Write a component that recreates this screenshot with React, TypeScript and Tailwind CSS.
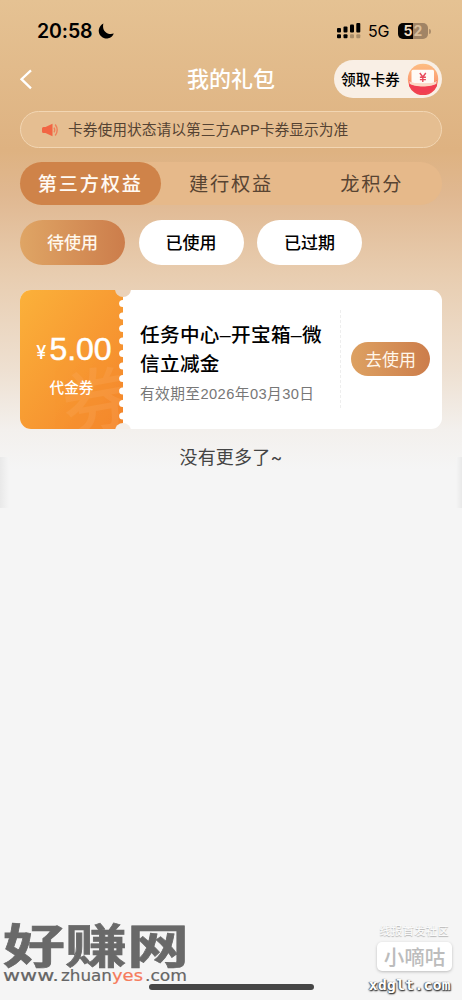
import React from "react";

const sans = "font-['Inter','Noto_Sans_CJK_SC',sans-serif]";
const liberation = "font-['Liberation_Sans','Noto_Sans_CJK_SC',sans-serif]";

function StatusBar() {
  return (
    <div className="flex h-[53px] items-center pt-[9px] pl-[37px] pr-[31px] text-black">
      <span className="w-[56px] text-[19.5px] leading-6 font-semibold tracking-[-0.1px] whitespace-nowrap">20:58</span>
      <svg className="ml-[4px] h-[18px] w-[18px]" viewBox="0 0 18 18">
        <path d="M6.4 1.6A7.8 7.8 0 1 0 16.8 11.6C10 13.6 4.6 8.6 6.4 1.6Z" />
      </svg>
      <svg className="ml-auto h-[18px] w-[24px]" viewBox="0 0 24 18">
        <g>
          <rect x="0" y="6" width="4" height="4.5" rx="1" />
          <rect x="6.5" y="4.5" width="4" height="6" rx="1" />
          <rect x="13" y="2.5" width="4" height="8" rx="1" />
          <rect x="19.3" y="1" width="4" height="9.5" rx="1" />
          <rect x="0" y="12.3" width="4" height="4" rx="1" />
          <rect x="6.5" y="12.3" width="4" height="4" rx="1" />
        </g>
        <g opacity=".25">
          <rect x="13" y="12.3" width="4" height="4" rx="1" />
          <rect x="19.3" y="12.3" width="4" height="4" rx="1" />
        </g>
      </svg>
      <span className="ml-[7px] w-[22px] text-[16px] leading-5 tracking-[-0.2px] whitespace-nowrap">5G</span>
      <div className="ml-[8px] flex h-[16px] w-[30px] overflow-hidden rounded-[5px] bg-[linear-gradient(90deg,#080502_51%,#a18465_51%)] text-[14px] leading-4 font-bold">
        <span className="w-[15.5px] pr-px text-right text-[#f2dfc5]">5</span>
        <span className="text-[#d9bd99]">2</span>
      </div>
      <div className="ml-px h-[5px] w-[2px] rounded-r-full bg-[#ad8e6c]" />
    </div>
  );
}

function Header() {
  return (
    <header className="grid h-[52px] grid-cols-[154px_154px_154px] items-center">
      <svg className="ml-[19px] h-[22px] w-[14px]" viewBox="0 0 14 22" fill="none" stroke="white" strokeWidth="2.3">
        <path d="M12 2.3L2.5 11.2L12 20.3" />
      </svg>
      <h1 className="text-center text-[22px] leading-8 font-medium text-white">我的礼包</h1>
      <div className="ml-[26px] flex h-[38px] w-[108px] items-center rounded-full bg-[#f9efe5] pl-[7px] text-black">
        <span className="w-[60px] pt-[2px] text-[14.7px] font-medium whitespace-nowrap">领取卡券</span>
        <svg className="ml-[6px] h-[32px] w-[32px]" viewBox="0 0 32 32">
          <defs>
            <linearGradient id="coupon" x1="0" x2="0" y1="0" y2="1">
              <stop stopColor="#fdbd82" />
              <stop offset=".6" stopColor="#fb9b70" />
              <stop offset="1" stopColor="#f9605a" />
            </linearGradient>
          </defs>
          <circle cx="16" cy="16" r="15.2" fill="url(#coupon)" />
          <path d="M2 17C6 22 26 22 30 17V23A15.2 15.2 0 0 1 2 23Z" fill="#f0434f" />
          <rect x="4.5" y="6.8" width="22.5" height="14" rx="1.5" fill="#fffaf6" />
          <path d="M2.2 17.5C6 21.8 26 21.8 29.8 17.5L29.4 21C25 25 7 25 2.6 21Z" fill="#fbd9c6" />
          <path d="M2.2 20.5C7 24.5 25 24.5 29.8 20.5A14.8 14.8 0 0 1 2.2 20.5Z" fill="#f13e53" />
          <path d="M12.8 10l3 4l3-4M12.9 14.2h6M12.9 16.6h6M15.8 14v5" fill="none" stroke="#e84a5b" strokeWidth="1.4" />
        </svg>
      </div>
    </header>
  );
}

function Notice() {
  return (
    <div className="mx-[20px] mt-[6px] flex h-[37px] items-center rounded-full border border-[#f2d6b3] bg-[#e5be91] pl-[21px] text-[#554333]">
      <svg className="h-[14px] w-[17px]" viewBox="0 0 17 14">
        <path d="M1.5 4H3.5L10.5 .8V13.2L3.5 10H1.5Q0 10 0 8.5V5.5Q0 4 1.5 4Z" fill="#f26543" />
        <path d="M12 4.7q1.4 2.3 0 4.6M13.2 1.5q4 5.4 0 11" fill="none" stroke="#ef8059" strokeWidth="1.4" />
      </svg>
      <span className={`${liberation} ml-[9px] text-[14.75px] leading-5 whitespace-nowrap`}>卡券使用状态请以第三方APP卡券显示为准</span>
    </div>
  );
}

function Tabs() {
  return (
    <nav className="mx-[20px] mt-[14px] grid h-[43px] grid-cols-3 items-center rounded-full bg-[#e6b98a] text-center text-[19.2px] tracking-[1.8px] text-[#584432]">
      <span className="flex h-full items-center justify-center rounded-full bg-[#cf8349] pt-[2px] font-medium text-[#fffaf4]">第三方权益</span>
      <span className="pt-[2px]">建行权益</span>
      <span className="pt-[2px]">龙积分</span>
    </nav>
  );
}

function Filters() {
  return (
    <div className="ml-[20px] mt-[15px] flex gap-[13.5px] text-center text-[17px] leading-[47px] font-medium text-black">
      <span className="h-[45px] w-[105px] rounded-full bg-linear-to-r from-[#dfa565] to-[#cc7d4b] text-[#fff8ed]">待使用</span>
      <span className="h-[45px] w-[105px] rounded-full bg-white">已使用</span>
      <span className="h-[45px] w-[105px] rounded-full bg-white">已过期</span>
    </div>
  );
}

function Coupon() {
  const notches = [13.5, 26, 38.5, 51, 63.5, 76, 88.5, 101, 113.5, 126];
  return (
    <article className="mx-[20px] mt-[25px] flex h-[139px] overflow-hidden rounded-[11px] bg-white">
      <div className="relative w-[112px] shrink-0">
        <svg className="absolute inset-0 h-[139px] w-[112px]" viewBox="0 0 112 139">
          <defs>
            <linearGradient id="ticket" x1="0" y1="0" x2="1" y2="1">
              <stop stopColor="#fbb13a" />
              <stop offset="1" stopColor="#f4852b" />
            </linearGradient>
            <clipPath id="ticket-area"><rect width="103" height="139" /></clipPath>
          </defs>
          <rect width="103" height="139" fill="url(#ticket)" />
          <g clipPath="url(#ticket-area)">
            <text x="42" y="137" fontSize="70" fontWeight="500" fill="#f9ab60" opacity=".26" transform="rotate(-10 74 110)">券</text>
          </g>
          {notches.map((y) => <circle key={y} cx="102.7" cy={y} r="3.6" fill="white" />)}
          <circle cx="103" cy="-1" r="8" fill="#ebd2b9" />
          <circle cx="103" cy="141" r="8" fill="#f4eee8" />
        </svg>
        <div className="relative flex h-full w-[103px] flex-col items-center pt-[40px] text-white">
          <div className="flex h-[38px] items-center whitespace-nowrap pl-[5px]">
            <span className="mt-[7px] text-[18px] font-medium">¥</span>
            <span className={`${liberation} ml-[3px] text-[32px] leading-[38px] [-webkit-text-stroke:0.5px_white]`}>5.00</span>
          </div>
          <span className="mt-[10px] text-[14.6px] leading-5 font-medium">代金券</span>
        </div>
      </div>
      <div className="w-[208px] shrink-0 pt-[31px] pl-[8px]">
        <h2 className={`${liberation} text-[19.6px] leading-[28.5px] font-medium tracking-[0.35px] whitespace-nowrap text-black`}>任务中心–开宝箱–微<br />信立减金</h2>
        <p className={`${liberation} mt-[6px] text-[14.7px] leading-5 tracking-[0.42px] whitespace-nowrap text-[#777]`}>有效期至2026年03月30日</p>
      </div>
      <div className="mt-[20px] h-[98px] border-l border-dashed border-[#eeeeee]" />
      <button className="mt-[52px] ml-[10px] h-[34px] w-[79px] rounded-full bg-linear-to-r from-[#dda162] to-[#cc7d4b] pt-[3px] text-[17px] text-[#fff6eb]">去使用</button>
    </article>
  );
}

function SiteMark() {
  return (
    <svg className="ml-[3px] h-[84px] w-[190px]" viewBox="0 0 190 84">
      <text x="0" y="57" textLength="186" lengthAdjust="spacingAndGlyphs" fontSize="57" fontWeight="700" fill="#696969" stroke="#696969" strokeWidth=".8" transform="scale(1 .82)">好赚网</text>
      <g fontSize="15" fill="#666" stroke="#666" strokeWidth=".2" className="font-['DejaVu_Sans',sans-serif]">
        <text x="0" y="65" textLength="56" lengthAdjust="spacingAndGlyphs">www.</text>
        <text x="58" y="65" textLength="51" lengthAdjust="spacingAndGlyphs">zhuan</text>
        <text x="109" y="65" textLength="31" lengthAdjust="spacingAndGlyphs" fill="#f57b5c" stroke="#f57b5c">yes</text>
        <text x="142" y="65" textLength="42" lengthAdjust="spacingAndGlyphs">.com</text>
      </g>
    </svg>
  );
}

function CommunityMark() {
  return (
    <div className="mr-[10px] flex w-[86px] flex-col items-end">
      <span className="mr-[3px] h-[16px] text-[11.2px] leading-4 font-medium tracking-[0.4px] whitespace-nowrap text-[#fafafa] [text-shadow:0_1px_1px_#b5b5b5]">线报首发社区</span>
      <span className="mt-[3px] h-[29px] w-[75px] rounded-[5px] bg-white text-center text-[20.5px] leading-[32px] font-medium text-[#bcbcbc] shadow-[0_1px_3px_#bcbcbc]">小嘀咕</span>
      <span className="mt-[6px] mr-px h-[19px] text-[14.5px] leading-[17px] font-bold tracking-[0.4px] whitespace-nowrap text-white font-['DejaVu_Sans_Mono',monospace] [text-shadow:0_1px_2px_#333,1px_1px_1px_#555,-1px_0_1px_#777]">xdglt.com</span>
    </div>
  );
}

export default function App() {
  return (
    <main className={`${sans} relative flex h-[1000px] w-[462px] flex-col overflow-hidden bg-[linear-gradient(180deg,#e5c293_0px,#deb281_150px,#e0b891_195px,#e8cdb0_275px,#eee0d1_370px,#f3f0ed_430px,#f5f5f5_470px)]`}>
      <StatusBar />
      <Header />
      <Notice />
      <Tabs />
      <Filters />
      <Coupon />
      <p className="mt-[15px] text-center text-[18px] leading-7 tracking-[0.2px] text-[#444]">没有更多了~</p>
      <div className="absolute top-[457px] left-0 h-[51px] w-[9px] bg-linear-to-r from-[#e9e9e9] to-[#f5f5f5]" />
      <div className="absolute top-[457px] right-0 h-[51px] w-[6px] bg-linear-to-l from-[#e9e9e9] to-[#f5f5f5]" />
      <footer className="mt-auto flex h-[84px] items-start justify-between">
        <SiteMark />
        <div className="pt-[7px]"><CommunityMark /></div>
      </footer>
      <div className="absolute bottom-[10px] left-[149px] h-[6px] w-[165px] rounded-full bg-[#464646]" />
    </main>
  );
}
